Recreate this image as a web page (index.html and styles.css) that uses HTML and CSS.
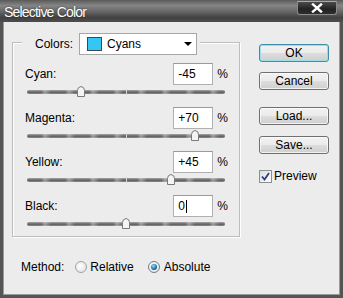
FILE: index.html
```html
<!DOCTYPE html>
<html>
<head>
    <title>Selective Color</title>
    <link rel="stylesheet" href="styles.css">
</head>
<body>
    <div class="window">
        <div class="titlebar">
            <span class="title">Selective Color</span>
            <div class="close">
                <svg width="12" height="10" viewBox="0 0 12 10">
                    <path d="M2 1.5 L10 8.5 M10 1.5 L2 8.5" stroke="#fff" stroke-width="2.4" stroke-linecap="square"/>
                </svg>
            </div>
        </div>
        <div class="frame">
            <div class="left">
                <div class="group">
                    <div class="colors-row">
                        <span class="colors-label">Colors:</span>
                        <div class="select">
                            <span class="swatch"></span>
                            <span class="select-text">Cyans</span>
                            <svg class="arrow" width="8" height="4" viewBox="0 0 8 4">
                                <path d="M0 0 H8 L4 4 Z" fill="#000"/>
                            </svg>
                        </div>
                    </div>

                    <div class="channel">
                        <div class="row">
                            <span class="label">Cyan:</span>
                            <div class="value">-45</div>
                            <span class="pct">%</span>
                        </div>
                        <div class="slider">
                            <span class="thumb" style="left: 27.5%"><svg width="10" height="11" viewBox="0 0 10 11"><path d="M1.5 10.5 V4.5 Q1.5 1 5 0.5 Q8.5 1 8.5 4.5 V10.5 Z" fill="#f4f4f4" stroke="#7a7a7a"/></svg></span>
                        </div>
                    </div>

                    <div class="channel">
                        <div class="row">
                            <span class="label">Magenta:</span>
                            <div class="value">+70</div>
                            <span class="pct">%</span>
                        </div>
                        <div class="slider">
                            <span class="thumb" style="left: 85%"><svg width="10" height="11" viewBox="0 0 10 11"><path d="M1.5 10.5 V4.5 Q1.5 1 5 0.5 Q8.5 1 8.5 4.5 V10.5 Z" fill="#f4f4f4" stroke="#7a7a7a"/></svg></span>
                        </div>
                    </div>

                    <div class="channel">
                        <div class="row">
                            <span class="label">Yellow:</span>
                            <div class="value">+45</div>
                            <span class="pct">%</span>
                        </div>
                        <div class="slider">
                            <span class="thumb" style="left: 72.5%"><svg width="10" height="11" viewBox="0 0 10 11"><path d="M1.5 10.5 V4.5 Q1.5 1 5 0.5 Q8.5 1 8.5 4.5 V10.5 Z" fill="#f4f4f4" stroke="#7a7a7a"/></svg></span>
                        </div>
                    </div>

                    <div class="channel">
                        <div class="row">
                            <span class="label">Black:</span>
                            <div class="value">0<span class="caret"></span></div>
                            <span class="pct">%</span>
                        </div>
                        <div class="slider">
                            <span class="thumb" style="left: 50%"><svg width="10" height="11" viewBox="0 0 10 11"><path d="M1.5 10.5 V4.5 Q1.5 1 5 0.5 Q8.5 1 8.5 4.5 V10.5 Z" fill="#f4f4f4" stroke="#7a7a7a"/></svg></span>
                        </div>
                    </div>
                </div>

                <div class="method">
                    <span class="method-label">Method:</span>
                    <span class="radio"></span>
                    <span class="radio-text">Relative</span>
                    <span class="radio checked"></span>
                    <span class="radio-text">Absolute</span>
                </div>
            </div>

            <div class="right">
                <div class="btn btn-default">OK</div>
                <div class="btn btn-cancel">Cancel</div>
                <div class="btn btn-load">Load...</div>
                <div class="btn btn-save">Save...</div>
                <div class="preview">
                    <span class="checkbox">
                        <svg width="11" height="11" viewBox="0 0 11 11">
                            <path d="M2 5.5 L4.5 8.5 L9 2" fill="none" stroke="#2b3f80" stroke-width="1.8"/>
                        </svg>
                    </span>
                    <span>Preview</span>
                </div>
            </div>
        </div>
    </div>
</body>
</html>
```

FILE: styles.css
```css
body {
    margin: 0;
    padding: 0;
    font-family: "Liberation Sans", Arial, sans-serif;
    font-size: 12px;
    color: #000;
    background: #ececec;
}

.window {
    width: 343px;
    height: 298px;
    display: flex;
    flex-direction: column;
}

.titlebar {
    height: 22px;
    flex-shrink: 0;
    display: flex;
    justify-content: space-between;
    align-items: flex-start;
    background: linear-gradient(to bottom, #5a5a5a 0%, #858585 25%, #6a6a6a 50%, #424242 80%, #4e4e4e 100%);
}

.title {
    color: #fff;
    font-size: 14px;
    letter-spacing: -0.8px;
    line-height: 22px;
    padding: 1px 0 0 4px;
    text-shadow: 0 0 2px rgba(0, 0, 0, 0.6);
}

.close {
    width: 40px;
    height: 14px;
    margin: 1px 6px 0 0;
    box-sizing: border-box;
    border: 1px solid #8a8a8a;
    border-top-color: #aaa;
    border-radius: 0 0 3px 3px;
    background: linear-gradient(to bottom, #4a4a4a, #222 60%, #2e2e2e);
    display: flex;
    justify-content: center;
    align-items: center;
}

.frame {
    flex: 1;
    display: flex;
    box-sizing: border-box;
    padding-left: 9px;
    background: #ececec;
    border: 3px solid #555;
    border-top: none;
    box-shadow: inset 1px 0 #9a9a9a, inset -1px 0 #9a9a9a, inset 0 -1px #9a9a9a;
}

.left {
    width: 228px;
}

/* etched group box around the channels */
.group {
    margin-top: 20px;
    border: 1px solid #bdbdbd;
    box-shadow: inset 1px 1px #fff, 1px 1px #fff;
    padding: 0 11px 0 12px;
}

.colors-row {
    display: flex;
    align-items: center;
    width: fit-content;
    margin: -10px 0 0 -3px;
    padding: 0 3px 0 13px;
    background: #ececec;
}

.colors-label {
    width: 44px;
}

.select {
    width: 118px;
    height: 22px;
    box-sizing: border-box;
    border: 1px solid #a6a6a6;
    background: #fff;
    display: flex;
    align-items: center;
    padding-left: 7px;
}

.swatch {
    width: 15px;
    height: 14px;
    box-sizing: border-box;
    border: 1px solid #3a4a50;
    background: #36c6f4;
}

.select-text {
    margin-left: 5px;
}

.arrow {
    margin-left: auto;
    margin-right: 4px;
}

.colors-row + .channel {
    margin-top: 8px;
}

.row {
    display: flex;
    align-items: center;
    height: 22px;
}

.label {
    margin-right: auto;
}

.value {
    width: 40px;
    height: 22px;
    box-sizing: border-box;
    border: 1px solid #b0b0b0;
    border-top-color: #9a9a9a;
    background: #fff;
    padding-left: 4px;
    line-height: 20px;
    display: flex;
    align-items: center;
}

.caret {
    display: inline-block;
    width: 1px;
    height: 13px;
    margin-left: 1px;
    background: #000;
}

.pct {
    margin-left: 4px;
}

.slider {
    position: relative;
    width: 198px;
    height: 4px;
    margin: 5px 0 13px 2px;
    border-radius: 2px;
    background:
        repeating-linear-gradient(90deg, rgba(255, 255, 255, 0) 0 14px, rgba(255, 255, 255, 0.35) 18px, rgba(255, 255, 255, 0) 24px),
        linear-gradient(to bottom, #a8a8a8, #5e5e5e 55%, #8c8c8c);
}

.slider::after {
    content: "";
    position: absolute;
    left: 99px;
    top: -1px;
    width: 1px;
    height: 6px;
    background: #d8d8d8;
}

.channel:last-child .slider {
    margin-bottom: 10px;
}

.thumb {
    position: absolute;
    top: -4px;
    width: 10px;
    height: 11px;
    transform: translateX(-50%);
    z-index: 1;
}

.thumb svg {
    display: block;
}

.method {
    display: flex;
    align-items: center;
    height: 22px;
    margin: 19px 0 0 9px;
}

.method-label {
    margin-right: 11px;
}

.radio {
    width: 12px;
    height: 12px;
    box-sizing: border-box;
    border-radius: 50%;
    border: 1px solid #a2a2a2;
    background: radial-gradient(circle at 40% 40%, #fff, #dcdcdc);
    display: flex;
    justify-content: center;
    align-items: center;
}

.radio.checked {
    border-color: #6d7f90;
    margin-left: 14px;
}

.radio.checked::after {
    content: "";
    width: 6px;
    height: 6px;
    border-radius: 50%;
    background: radial-gradient(circle at 40% 35%, #8ee0ff, #1c6aa6 60%, #0e3c6c);
}

.radio-text {
    margin-left: 3px;
}

.radio.checked + .radio-text {
    margin-left: 4px;
}

.right {
    width: 70px;
    margin-left: 19px;
    padding-top: 22px;
}

.btn {
    height: 18px;
    box-sizing: border-box;
    border: 1px solid #707070;
    border-radius: 3px;
    background: linear-gradient(to bottom, #f2f2f2 0%, #ebebeb 50%, #dddddd 51%, #cfcfcf 100%);
    box-shadow: inset 0 0 0 1px rgba(255, 255, 255, 0.7);
    text-align: center;
    line-height: 16px;
}

.btn-default {
    border-color: #3c8fa8;
    box-shadow: inset 0 0 0 1px #9fdcea;
}

.btn-cancel {
    margin-top: 10px;
}

.btn-load {
    margin-top: 17px;
}

.btn-save {
    margin-top: 11px;
}

.preview {
    display: flex;
    align-items: center;
    margin-top: 15px;
}

.checkbox {
    width: 13px;
    height: 13px;
    box-sizing: border-box;
    border: 1px solid #8e8f8f;
    background: linear-gradient(135deg, #dcdcdc, #fff);
    display: flex;
    justify-content: center;
    align-items: center;
    margin-right: 2px;
}
```
